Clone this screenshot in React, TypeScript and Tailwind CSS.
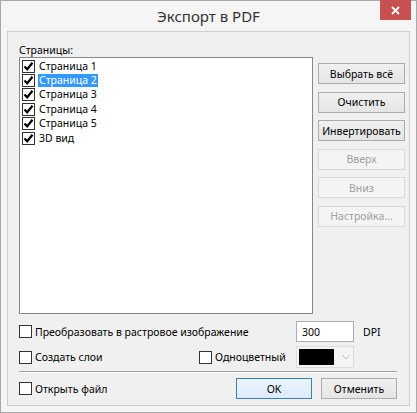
import React from 'react';

const font = { fontFamily: '"Noto Sans", "Open Sans", sans-serif' };

function Box({ checked }: { checked?: boolean }) {
  return (
    <div className="w-[13px] h-[13px] shrink-0 border border-[#333333] bg-white flex items-center justify-center">
      {checked && (
        <svg width="11" height="11" viewBox="0 0 11 11">
          <path d="M1.5 5.5 L4.2 8.3 L9.5 1.8" fill="none" stroke="#000" strokeWidth="2.2" />
        </svg>
      )}
    </div>
  );
}

function SideButton({ label, disabled }: { label: string; disabled?: boolean }) {
  return (
    <div
      className={
        disabled
          ? 'h-[21px] w-[87px] flex items-center justify-center border border-[#d9d9d9] bg-[#f4f4f4] text-[#a0a0a0]'
          : 'h-[21px] w-[87px] flex items-center justify-center border border-[#acacac] bg-gradient-to-b from-[#f0f0f0] to-[#e5e5e5] text-black'
      }
    >
      {label}
    </div>
  );
}

const pages = ['Страница 1', 'Страница 2', 'Страница 3', 'Страница 4', 'Страница 5', '3D вид'];

export default function App() {
  return (
    <div
      className="w-[417px] h-[413px] bg-[#f5f5f5] border border-[#a9a9a9] text-[10.5px] leading-[14px] text-black flex flex-col"
      style={font}
    >
      {/* title bar */}
      <div className="relative h-[30px] flex items-center justify-center">
        <span className="text-[15px] text-[#333] mt-[-1px]">Экспорт в PDF</span>
        <div className="absolute right-[5px] top-[-1px] w-[31px] h-[20px] bg-[#c75050] flex items-center justify-center">
          <svg width="9" height="9" viewBox="0 0 9 9">
            <path d="M1 1 L8 8 M8 1 L1 8" stroke="#fff" strokeWidth="1.8" />
          </svg>
        </div>
      </div>

      {/* client area */}
      <div className="ml-[6px] w-[403px] h-[375px] border border-[#cdcdcd] bg-[#f0f0f0] flex flex-col pl-[11px]">
        <div className="mt-[11px] h-[14px] leading-[14px]">Страницы:</div>

        <div className="flex">
          <div className="w-[294px] h-[257px] border border-[#828790] bg-white pt-[1px] pl-[2px]">
            {pages.map((p, i) => (
              <div key={p} className="h-[14.4px] flex items-center">
                <Box checked />
                <span
                  className={
                    i === 1
                      ? 'ml-[3px] px-[1px] h-[13px] leading-[13px] bg-[#3399ff] text-white'
                      : 'ml-[3px] px-[1px] h-[13px] leading-[13px]'
                  }
                >
                  {p}
                </span>
              </div>
            ))}
          </div>

          <div className="ml-[5px] mt-[6px] flex flex-col gap-[7.5px]">
            <SideButton label="Выбрать всё" />
            <SideButton label="Очистить" />
            <SideButton label="Инвертировать" />
            <SideButton label="Вверх" disabled />
            <SideButton label="Вниз" disabled />
            <SideButton label="Настройка..." disabled />
          </div>
        </div>

        {/* raster row */}
        <div className="mt-[7px] h-[21px] flex items-center">
          <div className="w-[277px] flex items-center">
            <Box />
            <span className="ml-[3px]">Преобразовать в растровое изображение</span>
          </div>
          <div className="w-[58px] h-[21px] border border-[#abadb3] bg-white flex items-center pl-[5px]">300</div>
          <span className="ml-[9px]">DPI</span>
        </div>

        {/* layers row */}
        <div className="mt-[4px] h-[22px] flex items-center">
          <div className="w-[180px] flex items-center">
            <Box />
            <span className="ml-[3px]">Создать слои</span>
          </div>
          <div className="w-[97px] flex items-center">
            <Box />
            <span className="ml-[3px]">Одноцветный</span>
          </div>
          <div className="w-[58px] h-[22px] border border-[#dcdcdc] bg-[#f4f4f4] flex items-center pl-[2px]">
            <div className="w-[35px] h-[16px] bg-black" />
            <svg className="ml-[8px]" width="8" height="5" viewBox="0 0 8 5">
              <path d="M0.5 0.5 L4 4 L7.5 0.5" fill="none" stroke="#b8b8b8" strokeWidth="1" />
            </svg>
          </div>
        </div>

        <div className="mt-[3px] w-[378px] h-[1px] bg-[#a0a0a0] border-b border-white box-content" />

        {/* bottom row */}
        <div className="mt-[5px] h-[21px] flex items-center">
          <div className="w-[217px] flex items-center">
            <Box />
            <span className="ml-[3px]">Открыть файл</span>
          </div>
          <div className="w-[76px] h-[21px] border border-[#3c7fb1] bg-gradient-to-b from-[#ecf4fc] to-[#dcecfc] flex items-center justify-center">
            OK
          </div>
          <div className="ml-[9px] w-[76px] h-[21px] border border-[#acacac] bg-gradient-to-b from-[#f0f0f0] to-[#e5e5e5] flex items-center justify-center">
            Отменить
          </div>
        </div>
      </div>
    </div>
  );
}
